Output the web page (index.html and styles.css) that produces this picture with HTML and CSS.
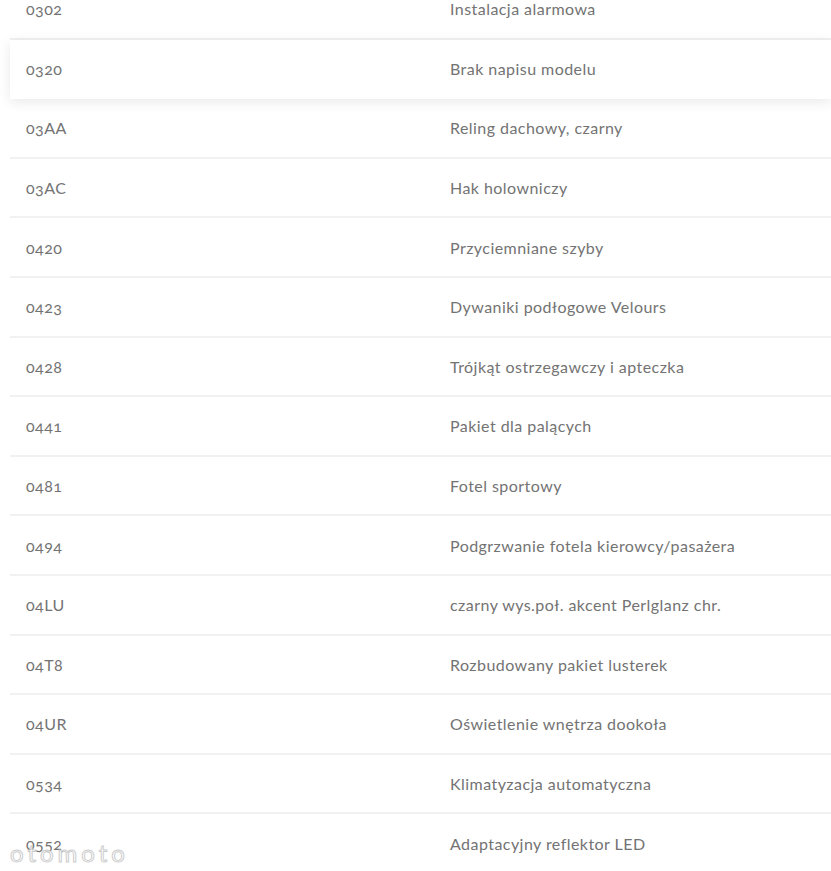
FILE: index.html
```html
<!DOCTYPE html>
<html lang="pl">
<head>
<meta charset="utf-8">
<link rel="stylesheet" href="styles.css">
</head>
<body>
<div class="list">
  <div class="row"><span class="code">0302</span><span class="desc">Instalacja alarmowa</span></div>
  <div class="row hover"><span class="code">0320</span><span class="desc">Brak napisu modelu</span></div>
  <div class="row"><span class="code">03AA</span><span class="desc">Reling dachowy, czarny</span></div>
  <div class="row"><span class="code">03AC</span><span class="desc">Hak holowniczy</span></div>
  <div class="row"><span class="code">0420</span><span class="desc">Przyciemniane szyby</span></div>
  <div class="row"><span class="code">0423</span><span class="desc">Dywaniki podłogowe Velours</span></div>
  <div class="row"><span class="code">0428</span><span class="desc">Trójkąt ostrzegawczy i apteczka</span></div>
  <div class="row"><span class="code">0441</span><span class="desc">Pakiet dla palących</span></div>
  <div class="row"><span class="code">0481</span><span class="desc">Fotel sportowy</span></div>
  <div class="row"><span class="code">0494</span><span class="desc">Podgrzwanie fotela kierowcy/pasażera</span></div>
  <div class="row"><span class="code">04LU</span><span class="desc">czarny wys.poł. akcent Perlglanz chr.</span></div>
  <div class="row"><span class="code">04T8</span><span class="desc">Rozbudowany pakiet lusterek</span></div>
  <div class="row"><span class="code">04UR</span><span class="desc">Oświetlenie wnętrza dookoła</span></div>
  <div class="row"><span class="code">0534</span><span class="desc">Klimatyzacja automatyczna</span></div>
  <div class="row"><span class="code">0552</span><span class="desc">Adaptacyjny reflektor LED</span></div>
</div>
<div class="watermark">otomoto</div>
</body>
</html>
```

FILE: styles.css
```css
html, body {
  margin: 0;
  padding: 0;
  background: #ffffff;
  overflow: hidden;
}
body {
  font-family: "Lato", "Open Sans", sans-serif;
  font-variant-numeric: oldstyle-nums;
  color: #737373;
  font-size: 16px;
  letter-spacing: 0.45px;
  height: 871px;
  position: relative;
}
.list {
  margin-top: -20px;
  margin-left: 10px;
}
.row {
  display: grid;
  grid-template-columns: 424px 1fr;
  align-items: center;
  height: 57.6px;
  padding-left: 16px;
  border-bottom: 2px solid #f1f1f1;
}
.row.hover {
  position: relative;
  border-bottom-color: transparent;
  box-shadow: 0 3px 12px rgba(0, 0, 0, 0.09);
}
.watermark {
  position: absolute;
  left: 10px;
  top: 838px;
  font-family: "Lato", sans-serif;
  font-size: 24px;
  letter-spacing: 4px;
  color: #ffffff;
  -webkit-text-stroke: 1px #c8c8c8;
  opacity: 0.9;
}
```
